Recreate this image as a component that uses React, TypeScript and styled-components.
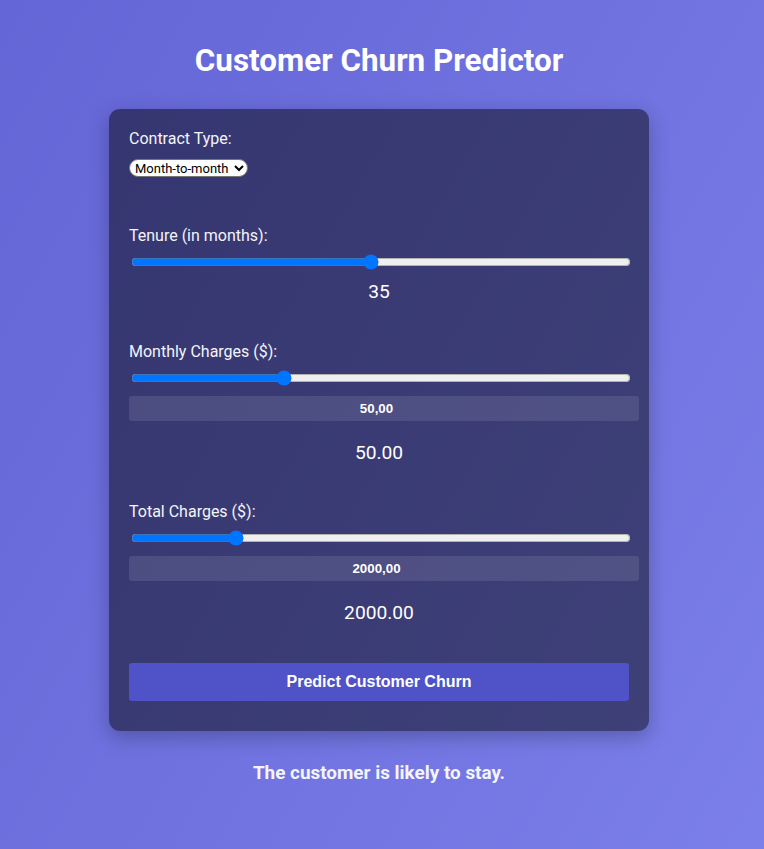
import { useState } from 'react';
import styled, { createGlobalStyle } from 'styled-components';

const GlobalStyle = createGlobalStyle`
  html, body {
    margin: 0;
    padding: 0;
  }

  body {
    font-family: Roboto, "Liberation Sans", Arial, sans-serif;
    background: linear-gradient(120deg, #6465d6 0%, #7b7fe9 100%);
    min-height: 100vh;
    color: #ffffff;
  }
`;

const Page = styled.div`
  min-height: 849px;
  box-sizing: border-box;
  display: flex;
  flex-direction: column;
  align-items: center;
  padding: 42px 6px 40px 0;
`;

const Title = styled.h1`
  font-size: 31.4px;
  font-weight: 700;
  margin: 0 0 30px;
  line-height: 37px;
  color: #ffffff;
`;

const Card = styled.form`
  width: 500px;
  background: rgba(0, 0, 0, 0.48);
  border-radius: 11px;
  padding: 20px 20px 30px;
  box-shadow: 0 6px 20px rgba(0, 0, 0, 0.25);
  display: flex;
  flex-direction: column;
`;

const Group = styled.div<{ $gap?: number }>`
  display: flex;
  flex-direction: column;
  align-items: stretch;
  margin-bottom: ${({ $gap }) => $gap ?? 38}px;
`;

const Label = styled.label`
  font-size: 16px;
  line-height: 19px;
  color: #f4f4f8;
  margin-bottom: 7px;
`;

const Select = styled.select`
  align-self: flex-start;
  margin-top: 4px;
  width: 119px;
  font-family: Roboto, "Liberation Sans", sans-serif;
  font-size: 13px;
  height: 18px;
  padding: 0 1px;
  border: 1px solid #767676;
  border-radius: 9px;
  background: #ffffff;
  color: #000000;
`;

const Range = styled.input`
  width: 100%;
  margin: 2px 2px;
`;

/* leaves room on the right as a number field's spin buttons would */
const NumberBox = styled.input`
  width: calc(100% - 15px);
  padding: 5px 20px 5px 5px;
  margin: 8px 0 20px;
  border: none;
  border-radius: 3px;
  background: rgba(255, 255, 255, 0.1);
  color: #ffffff;
  font-family: "Liberation Sans", Arial, sans-serif;
  font-weight: 700;
  font-size: 13.33px;
  line-height: 15px;
  text-align: center;
  outline: none;
`;

const Value = styled.div<{ $after?: number }>`
  margin-top: ${({ $after }) => $after ?? 8}px;
  font-size: 19.2px;
  line-height: 23px;
  text-align: center;
  color: #ffffff;
`;

const Button = styled.button`
  width: 100%;
  height: 38px;
  border: none;
  border-radius: 3px;
  background: #4f53c7;
  color: #ffffff;
  font-family: "Liberation Sans", Arial, sans-serif;
  font-size: 16px;
  font-weight: 700;
  cursor: pointer;
`;

const Result = styled.p`
  margin: 31px 0 0;
  font-size: 18.9px;
  font-weight: 700;
  line-height: 22px;
  color: #f4f4fb;
`;

const comma = (v: number) => v.toFixed(2).replace('.', ',');

export default function App() {
  const [contract, setContract] = useState('Month-to-month');
  const [tenure, setTenure] = useState(35);
  const [monthly, setMonthly] = useState(50);
  const [total, setTotal] = useState(2000);

  return (
    <>
      <GlobalStyle />
      <Page>
        <Title>Customer Churn Predictor</Title>
        <Card onSubmit={(e) => e.preventDefault()}>
          <Group $gap={49}>
            <Label>Contract Type:</Label>
            <Select value={contract} onChange={(e) => setContract(e.target.value)}>
              <option>Month-to-month</option>
              <option>One year</option>
              <option>Two year</option>
            </Select>
          </Group>

          <Group $gap={39}>
            <Label>Tenure (in months):</Label>
            <Range
              type="range"
              min={1}
              max={72}
              value={tenure}
              onChange={(e) => setTenure(Number(e.target.value))}
            />
            <Value>{tenure}</Value>
          </Group>

          <Group>
            <Label>Monthly Charges ($):</Label>
            <Range
              type="range"
              min={20}
              max={120}
              step={0.01}
              value={monthly}
              onChange={(e) => setMonthly(Number(e.target.value))}
            />
            <NumberBox readOnly value={comma(monthly)} />
            <Value $after={0}>{monthly.toFixed(2)}</Value>
          </Group>

          <Group $gap={39}>
            <Label>Total Charges ($):</Label>
            <Range
              type="range"
              min={0}
              max={10000}
              step={0.01}
              value={total}
              onChange={(e) => setTotal(Number(e.target.value))}
            />
            <NumberBox readOnly value={comma(total)} />
            <Value $after={0}>{total.toFixed(2)}</Value>
          </Group>

          <Button type="submit">Predict Customer Churn</Button>
        </Card>
        <Result>The customer is likely to stay.</Result>
      </Page>
    </>
  );
}
